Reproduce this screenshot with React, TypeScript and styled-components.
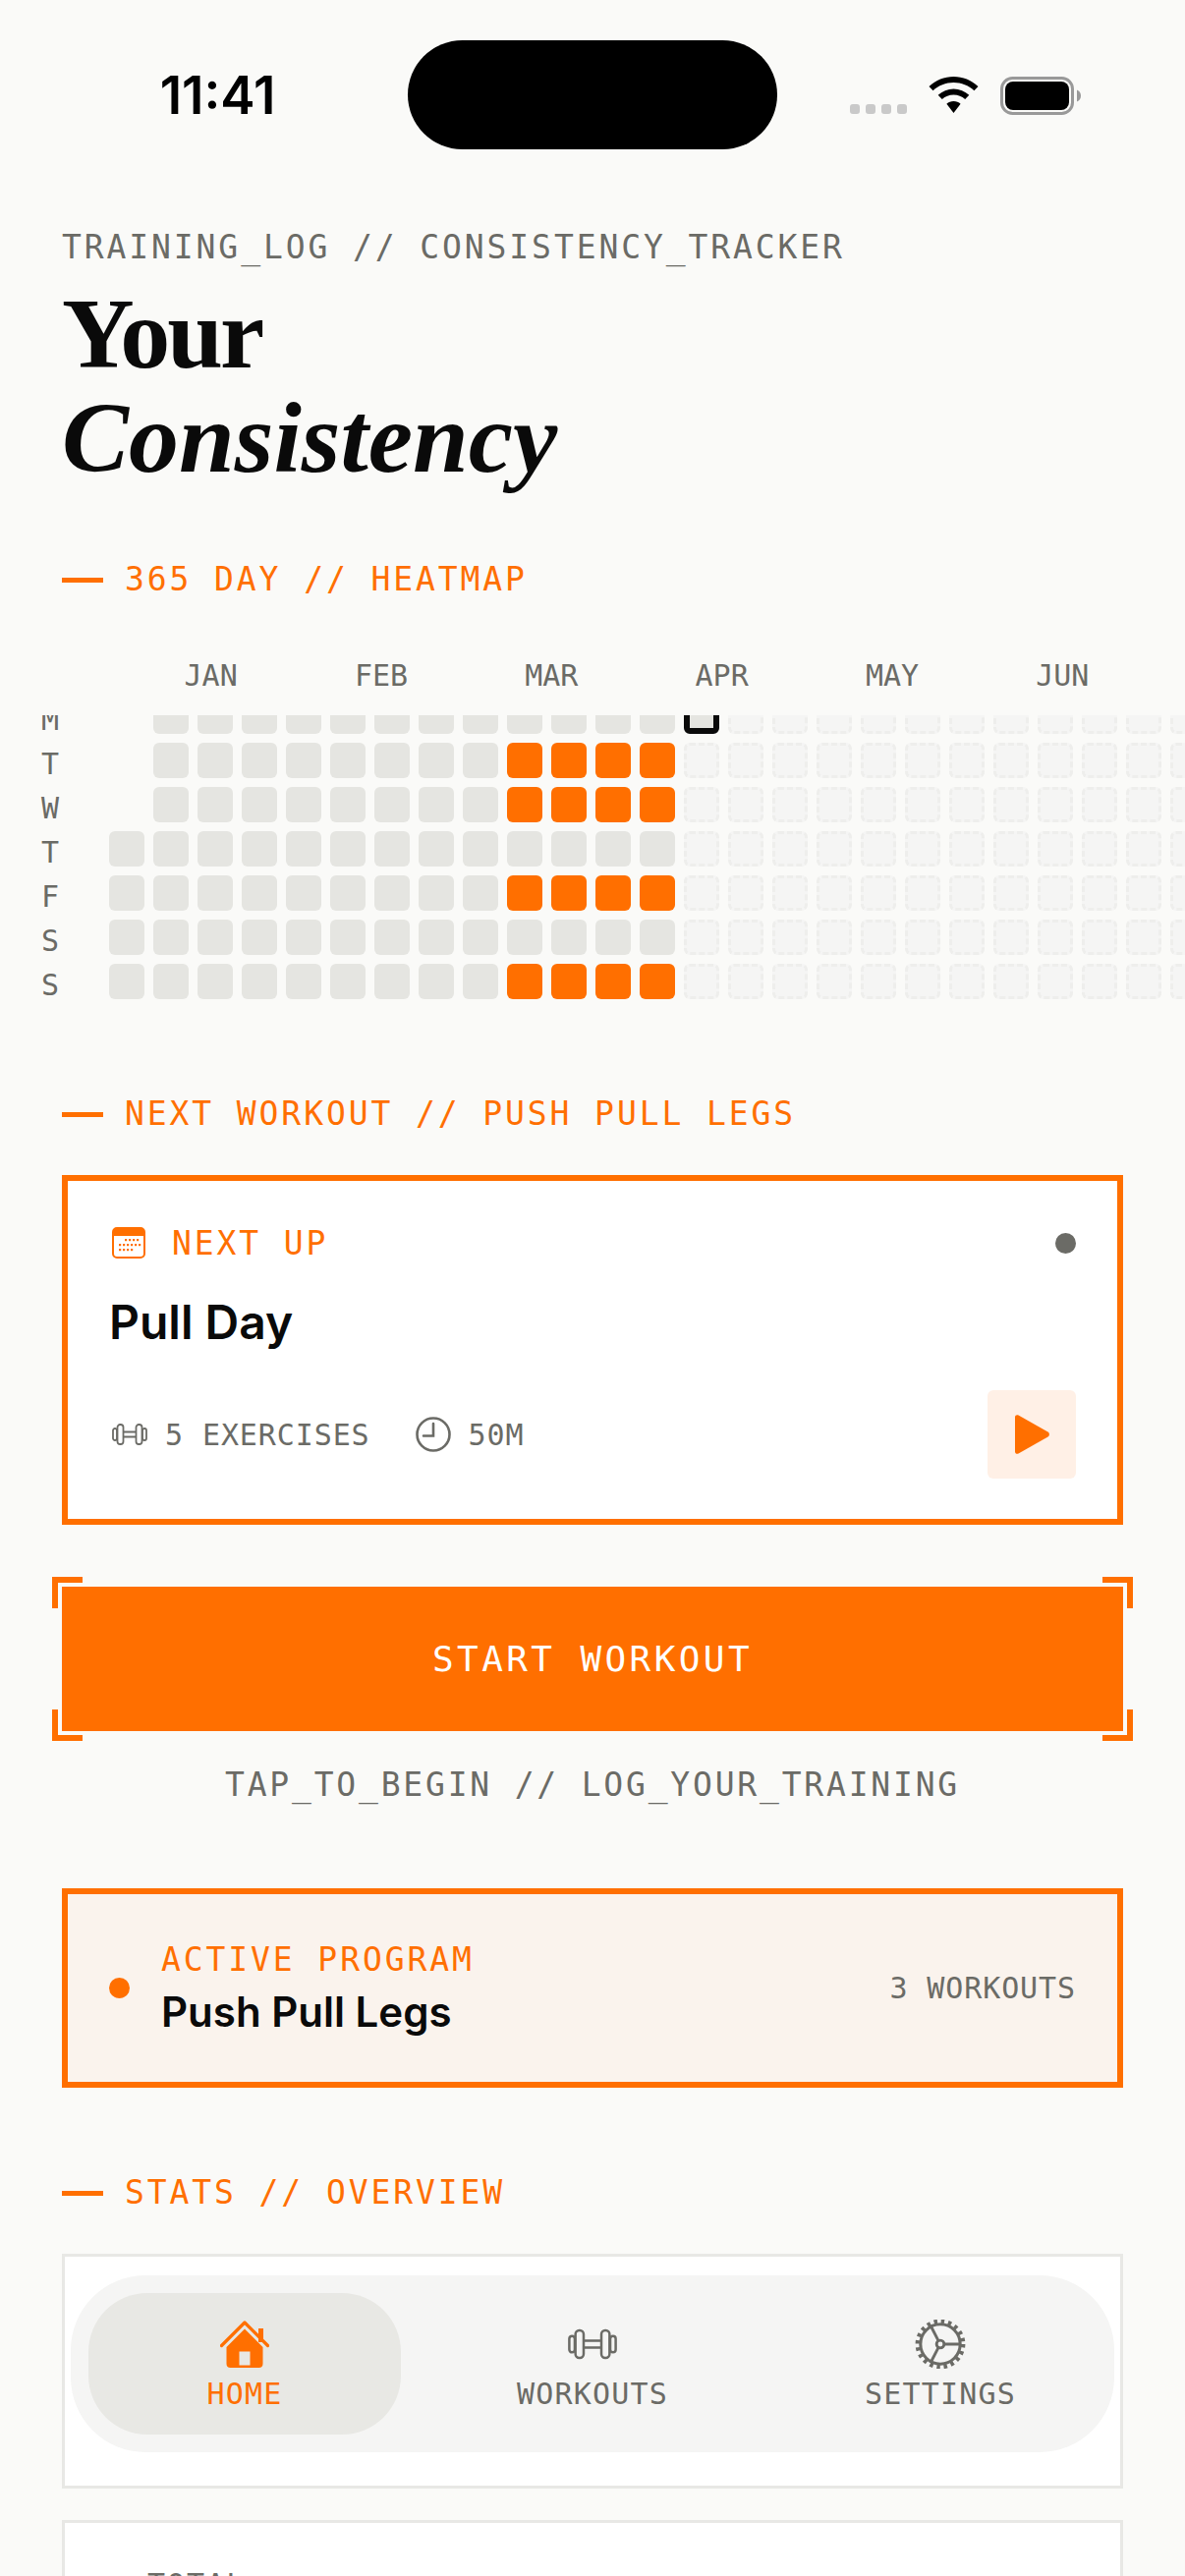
import styled, { createGlobalStyle } from 'styled-components';

const ORANGE = '#ff6f00';
const GREY = '#6b6b66';
const INK = '#0a0a0a';
const MONO = `"DejaVu Sans Mono", "Liberation Mono", monospace`;

const Global = createGlobalStyle`
  html, body {
    margin: 0;
    padding: 0;
    background: #fafaf8;
  }
  body {
    width: 1206px;
    height: 2622px;
    overflow: hidden;
    position: relative;
  }
`;

const Page = styled.div`
  width: 1206px;
  height: 2622px;
  overflow: hidden;
  font-family: ${MONO};
  background: #fafaf8;
`;

const StatusBar = styled.div`
  height: 152px;
  padding-top: 41px;
  box-sizing: border-box;
  display: grid;
  grid-template-columns: 415px 376px 1fr;
`;

const Time = styled.div`
  font-family: Inter, sans-serif;
  font-weight: 600;
  font-size: 53px;
  line-height: 112px;
  text-align: center;
  padding-left: 28px;
  color: #000;
`;

const Island = styled.div`
  height: 111px;
  background: #000;
  border-radius: 56px;
`;

const StatusIcons = styled.div`
  display: flex;
  align-items: flex-start;
  padding: 37px 0 0 74px;
  gap: 22px;
`;

const Signal = styled.div`
  display: flex;
  gap: 6px;
  margin-top: 28px;
  i {
    width: 10px;
    height: 10px;
    border-radius: 3px;
    background: #c9c9c9;
  }
`;

const Content = styled.div`
  padding: 80px 63px 0;
`;

const Eyebrow = styled.div`
  font-size: 33px;
  line-height: 40px;
  letter-spacing: 2.9px;
  color: ${GREY};
  white-space: nowrap;
`;

const Title = styled.h1`
  margin: 15px 0 0;
  font-family: "Liberation Serif", serif;
  font-weight: 700;
  font-size: 102px;
  line-height: 106px;
  letter-spacing: -3px;
  color: ${INK};
  em {
    display: block;
    font-style: italic;
    letter-spacing: 0;
  }
`;

const SectionHead = styled.div<{ $top: number }>`
  display: flex;
  align-items: center;
  gap: 22px;
  margin-top: ${(p) => p.$top}px;
  font-size: 33px;
  line-height: 40px;
  letter-spacing: 2.9px;
  color: ${ORANGE};
  white-space: nowrap;
  &::before {
    content: '';
    width: 42px;
    height: 5px;
    background: ${ORANGE};
  }
`;

const Months = styled.div`
  display: flex;
  margin: 60px 0 0 128px;
  width: 1040px;
  font-size: 30px;
  line-height: 36px;
  color: ${GREY};
  span {
    flex: 1;
    text-align: center;
  }
`;

const HeatClip = styled.div`
  height: 297px;
  margin-top: 22px;
  overflow: hidden;
`;

const HeatInner = styled.div`
  display: flex;
  margin-top: -17px;
  padding-left: 33px;
`;

const DayCol = styled.div`
  display: flex;
  flex-direction: column;
  gap: 9px;
  width: 78px;
  flex: none;
  span {
    height: 36px;
    width: 36px;
    font-size: 30px;
    line-height: 44px;
    text-align: center;
    color: ${GREY};
  }
`;

const Grid = styled.div`
  display: grid;
  grid-template-columns: repeat(25, 36px);
  grid-auto-flow: column;
  grid-template-rows: repeat(7, 36px);
  gap: 9px;
`;

type CellKind = 'empty' | 'past' | 'done' | 'today' | 'future';

const Cell = styled.div<{ $kind: CellKind }>`
  box-sizing: border-box;
  border-radius: 6px;
  ${(p) => p.$kind === 'past' && `background: #e5e5e1;`}
  ${(p) => p.$kind === 'done' && `background: ${ORANGE};`}
  ${(p) => p.$kind === 'today' && `background: #e5e5e1; border: 6px solid ${INK};`}
  ${(p) => p.$kind === 'future' && `background: #f5f5f4; border: 3px dashed #eeeeec;`}
`;

const Card = styled.div`
  margin-top: 42px;
  height: 356px;
  box-sizing: border-box;
  border: 6px solid ${ORANGE};
  background: #fff;
  padding: 45px 42px 41px;
  display: flex;
  flex-direction: column;
`;

const CardTop = styled.div`
  display: flex;
  align-items: center;
  height: 36px;
  gap: 27px;
  font-size: 33px;
  letter-spacing: 2.9px;
  color: ${ORANGE};
  svg {
    margin-left: 3px;
  }
`;

const Dot = styled.div`
  width: 21px;
  height: 21px;
  border-radius: 50%;
  background: ${GREY};
  margin-left: auto;
`;

const CardTitle = styled.div`
  margin-top: 34px;
  font-family: Inter, sans-serif;
  font-weight: 600;
  font-size: 48px;
  line-height: 58px;
  color: ${INK};
`;

const CardBottom = styled.div`
  margin-top: auto;
  display: flex;
  align-items: center;
`;

const Meta = styled.div<{ $gap: number }>`
  display: flex;
  align-items: center;
  gap: ${(p) => p.$gap}px;
  margin-right: 43px;
  font-size: 30px;
  letter-spacing: 0.9px;
  color: ${GREY};
  svg {
    margin-left: 3px;
  }
`;

const PlayBox = styled.div`
  margin-left: auto;
  width: 90px;
  height: 90px;
  border-radius: 6px;
  background: #fff0e6;
  display: flex;
  align-items: center;
  justify-content: center;
`;

const StartWrap = styled.div`
  position: relative;
  margin-top: 63px;
`;

const StartButton = styled.div`
  height: 147px;
  background: ${ORANGE};
  color: #fff;
  font-size: 36px;
  letter-spacing: 3.4px;
  display: flex;
  align-items: center;
  justify-content: center;
`;

const Bracket = styled.i<{ $v: 'top' | 'bottom'; $h: 'left' | 'right' }>`
  position: absolute;
  width: 31px;
  height: 32px;
  box-sizing: border-box;
  ${(p) => p.$v}: -10px;
  ${(p) => p.$h}: -10px;
  border-${(p) => p.$v}: 6px solid ${ORANGE};
  border-${(p) => p.$h}: 6px solid ${ORANGE};
`;

const Hint = styled.div`
  margin-top: 35px;
  text-align: center;
  font-size: 33px;
  line-height: 40px;
  letter-spacing: 2.8px;
  color: ${GREY};
  white-space: nowrap;
`;

const Program = styled.div`
  margin-top: 85px;
  height: 203px;
  box-sizing: border-box;
  border: 6px solid ${ORANGE};
  background: #faf3ed;
  padding: 0 42px;
  display: flex;
  align-items: center;
`;

const ProgramDot = styled.div`
  width: 21px;
  height: 21px;
  border-radius: 50%;
  background: ${ORANGE};
  margin-right: 32px;
`;

const ProgramText = styled.div`
  flex: 1;
  div:first-child {
    font-size: 33px;
    line-height: 40px;
    letter-spacing: 2.9px;
    color: ${ORANGE};
    margin-bottom: 8px;
  }
  div:last-child {
    font-family: Inter, sans-serif;
    font-weight: 600;
    font-size: 42px;
    line-height: 50px;
    color: ${INK};
  }
`;

const ProgramCount = styled.div`
  font-size: 30px;
  letter-spacing: 0.9px;
  color: ${GREY};
`;

const StatCard = styled.div<{ $h: number; $top: number }>`
  margin-top: ${(p) => p.$top}px;
  height: ${(p) => p.$h}px;
  box-sizing: border-box;
  border: 3px solid #e8e8e5;
  background: #fff;
  padding: 45px 84px 0;
  font-size: 30px;
  line-height: 36px;
  letter-spacing: 2px;
  color: ${GREY};
`;

const TabBar = styled.div`
  position: absolute;
  left: 72px;
  right: 72px;
  bottom: 126px;
  height: 180px;
  box-sizing: border-box;
  padding: 18px;
  border-radius: 76px;
  background: #f5f5f4;
  display: grid;
  grid-template-columns: repeat(3, 318px);
  gap: 36px;
`;

const Tab = styled.div<{ $active?: boolean }>`
  border-radius: 60px;
  background: ${(p) => (p.$active ? '#e8e8e4' : 'transparent')};
  color: ${(p) => (p.$active ? ORANGE : GREY)};
  display: flex;
  flex-direction: column;
  align-items: center;
  font-size: 30px;
  line-height: 36px;
  letter-spacing: 1.2px;
  svg {
    display: block;
    height: 50px;
    margin-top: 27px;
    margin-bottom: 8px;
  }
`;

const WifiIcon = () => (
  <svg width="51" height="37" viewBox="0 0 51 37" fill="#000">
    <path d="M25.5 0C16 0 7.500 3.600 0.500 10L4.600 14.200C10.200 9 17.500 6 25.500 6S40.800 9 46.400 14.200L50.500 10C43.500 3.600 35 0 25.500 0Z" />
    <path d="M25.500 12.500C19.500 12.500 14 14.800 9.700 18.800L13.800 23C17 20.100 21 18.500 25.500 18.500S34 20.100 37.200 23L41.300 18.800C37 14.800 31.500 12.500 25.500 12.500Z" />
    <path d="M25.500 25C22.800 25 20.300 26 18.400 27.800L25.500 37L32.600 27.800C30.700 26 28.200 25 25.500 25Z" />
  </svg>
);

const BatteryIcon = () => (
  <svg width="82" height="39" viewBox="0 0 82 39">
    <rect x="1.500" y="1.500" width="72" height="36" rx="11" fill="none" stroke="#999" strokeWidth="3" />
    <rect x="5" y="5" width="65" height="29" rx="8" fill="#000" />
    <path d="M78 13.500C80.500 14.500 82 16.800 82 19.500S80.500 24.500 78 25.500Z" fill="#999" />
  </svg>
);

const CalendarIcon = () => (
  <svg width="34" height="32" viewBox="0 0 34 32">
    <rect x="1" y="1" width="32" height="30" rx="4" fill="none" stroke={ORANGE} strokeWidth="2" />
    <path d="M1 5a4 4 0 0 1 4-4h24a4 4 0 0 1 4 4v4H1Z" fill={ORANGE} />
    {[
      [14, 13], [18, 13], [22, 13], [26, 13],
      [8, 18], [12, 18], [16, 18], [20, 18], [24, 18], [28, 18],
      [8, 23], [12, 23], [16, 23], [20, 23],
    ].map(([x, y]) => (
      <rect key={`${x}-${y}`} x={x - 1} y={y - 1} width="2.200" height="2.200" fill={ORANGE} />
    ))}
  </svg>
);

const DumbbellIcon = ({ w, h }: { w: number; h: number }) => (
  <svg width={w} height={h} viewBox="0 0 36 22" fill="none" stroke="currentColor" strokeWidth="1.800">
    <rect x="1" y="5" width="4" height="12" rx="2" />
    <rect x="5.500" y="1" width="6" height="20" rx="2.800" />
    <rect x="24.500" y="1" width="6" height="20" rx="2.800" />
    <rect x="31" y="5" width="4" height="12" rx="2" />
    <path d="M11.500 8.500H24.500M11.500 13.500H24.500" />
  </svg>
);

const ClockIcon = () => (
  <svg width="36" height="36" viewBox="0 0 36 36" fill="none" stroke={GREY} strokeWidth="2.600">
    <circle cx="18" cy="18" r="16.500" />
    <path d="M18 7V19.500H8" strokeLinecap="round" />
  </svg>
);

const PlayIcon = () => (
  <svg width="38" height="42" viewBox="0 0 38 42">
    <path d="M2 3.500C2 1.500 3.800 .6 5.500 1.500L35.500 18.500C37.400 19.600 37.400 22.400 35.500 23.500L5.500 40.500C3.800 41.400 2 40.500 2 38.500Z" fill={ORANGE} />
  </svg>
);

const HomeIcon = () => (
  <svg width="50" height="50" viewBox="0 0 50 50">
    <path d="M1.500 26.500L25 3L48.500 26.500" fill="none" stroke={ORANGE} strokeWidth="3.200" strokeLinecap="round" strokeLinejoin="round" />
    <rect x="39" y="9" width="5" height="14" fill={ORANGE} />
    <path fillRule="evenodd" d="M25 9.500L43.500 28V45C43.500 47.500 42 49 39.500 49H10.500C8 49 6.500 47.500 6.500 45V28ZM19.500 32.500V46.500H30.500V32.500Z" fill={ORANGE} />
  </svg>
);

const GearIcon = () => (
  <svg width="52" height="52" viewBox="0 0 52 52" fill="none" stroke={GREY}>
    <circle cx="26" cy="26" r="21" strokeWidth="3.200" />
    <circle cx="26" cy="26" r="24" strokeWidth="4.800" strokeDasharray="3.600 3.940" />
    <circle cx="26" cy="26" r="4" strokeWidth="3" />
    <path d="M30 26H47M24 22.500L15.500 6M24 29.500L15.500 46" strokeWidth="3" />
  </svg>
);

const DAYS = ['M', 'T', 'W', 'T', 'F', 'S', 'S'];
const MONTHS = ['JAN', 'FEB', 'MAR', 'APR', 'MAY', 'JUN'];
const DONE_ROWS = [1, 2, 4, 6];

const kindFor = (col: number, row: number): CellKind => {
  if (col === 0 && row < 3) return 'empty';
  if (col === 13 && row === 0) return 'today';
  if (col >= 13) return 'future';
  if (col >= 9 && DONE_ROWS.includes(row)) return 'done';
  return 'past';
};

const cells: CellKind[] = [];
for (let c = 0; c < 25; c++) {
  for (let r = 0; r < 7; r++) cells.push(kindFor(c, r));
}

export default function App() {
  return (
    <Page>
      <Global />
      <StatusBar>
        <Time>11:41</Time>
        <Island />
        <StatusIcons>
          <Signal>
            <i />
            <i />
            <i />
            <i />
          </Signal>
          <WifiIcon />
          <BatteryIcon />
        </StatusIcons>
      </StatusBar>

      <Content>
        <Eyebrow>TRAINING_LOG // CONSISTENCY_TRACKER</Eyebrow>
        <Title>
          Your
          <em>Consistency</em>
        </Title>

        <SectionHead $top={71}>365 DAY // HEATMAP</SectionHead>
      </Content>

      <Months>
        {MONTHS.map((m) => (
          <span key={m}>{m}</span>
        ))}
      </Months>
      <HeatClip>
        <HeatInner>
          <DayCol>
            {DAYS.map((d, i) => (
              <span key={i}>{d}</span>
            ))}
          </DayCol>
          <Grid>
            {cells.map((k, i) => (
              <Cell key={i} $kind={k} />
            ))}
          </Grid>
        </HeatInner>
      </HeatClip>

      <Content style={{ paddingTop: 0 }}>
        <SectionHead $top={89}>NEXT WORKOUT // PUSH PULL LEGS</SectionHead>
        <Card>
          <CardTop>
            <CalendarIcon />
            NEXT UP
            <Dot />
          </CardTop>
          <CardTitle>Pull Day</CardTitle>
          <CardBottom>
            <Meta $gap={18}>
              <DumbbellIcon w={36} h={22} />5 EXERCISES
            </Meta>
            <Meta $gap={18}>
              <ClockIcon />
              50M
            </Meta>
            <PlayBox>
              <PlayIcon />
            </PlayBox>
          </CardBottom>
        </Card>

        <StartWrap>
          <Bracket $v="top" $h="left" />
          <Bracket $v="top" $h="right" />
          <Bracket $v="bottom" $h="left" />
          <Bracket $v="bottom" $h="right" />
          <StartButton>START WORKOUT</StartButton>
        </StartWrap>
        <Hint>TAP_TO_BEGIN // LOG_YOUR_TRAINING</Hint>

        <Program>
          <ProgramDot />
          <ProgramText>
            <div>ACTIVE PROGRAM</div>
            <div>Push Pull Legs</div>
          </ProgramText>
          <ProgramCount>3 WORKOUTS</ProgramCount>
        </Program>

        <SectionHead $top={87}>STATS // OVERVIEW</SectionHead>
        <StatCard $h={239} $top={42} />
        <StatCard $h={300} $top={32}>
          TOTAL
        </StatCard>
      </Content>

      <TabBar>
        <Tab $active>
          <HomeIcon />
          HOME
        </Tab>
        <Tab>
          <DumbbellIcon w={50} h={50} />
          WORKOUTS
        </Tab>
        <Tab>
          <GearIcon />
          SETTINGS
        </Tab>
      </TabBar>
    </Page>
  );
}
